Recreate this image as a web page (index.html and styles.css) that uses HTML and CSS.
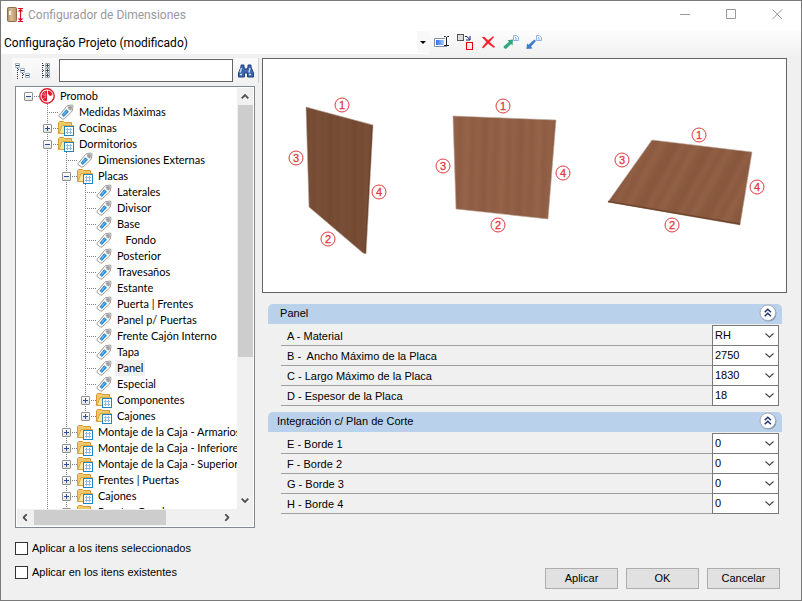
FILE: index.html
```html
<!DOCTYPE html>
<html lang="es">
<head>
    <meta charset="UTF-8">
    <title>Configurador de Dimensiones</title>
    <link rel="stylesheet" href="styles.css">
</head>
<body>
    <!-- shared icons -->
    <svg class="symbols" width="0" height="0">
        <symbol id="tag" viewBox="0 0 16 16">
            <path d="M1 11.5 L8.5 2.5 L10 1.5 L14.5 1 L15 2 L14.5 6 L13.5 8 L6 15 L4.5 15 L1 12.5Z" fill="#fff" stroke="#9a9a9a"/>
            <path d="M9 2.8 L14 1.8 L13.6 6.2 L12.6 7.2Z" fill="#cfcfcf"/>
            <rect x="11" y="3" width="2" height="2" fill="#fff" stroke="#808080"/>
            <path d="M3.5 10.8 L8.2 5.2 L11 7.8 L5.8 13Z" fill="#2d8fd0"/>
            <path d="M5.5 10.5 L8.5 7.2" stroke="#8fd0f4"/>
        </symbol>
        <symbol id="folder" viewBox="0 0 16 16">
            <path d="M.5 13.5 V2.5 L1.5 1.5 H5.5 L6.5 2.5 H13.5 V5.5 H4.5 L2 13.5Z" fill="#f0c96a" stroke="#d39a37"/>
            <path d="M1 13.5 L4 5.5 H15.5 L13 13.5Z" fill="#fde6a0" stroke="#dba545"/>
            <rect x="6.5" y="6.5" width="9" height="9" fill="#fff" stroke="#1f86c0"/>
            <path d="M8 9.5 H14 M8 12.5 H14 M9.5 8 V14 M12.5 8 V14" stroke="#93bbe0"/>
        </symbol>
        <symbol id="down" viewBox="0 0 9 5"><path d="M.5 .5 L4.5 4.2 L8.5 .5" fill="none" stroke="#444" stroke-width="1.1"/></symbol>
        <symbol id="arrow" viewBox="0 0 8 5"><path d="M.7 4.3 L4 1 L7.3 4.3" fill="none" stroke="#505050" stroke-width="1.8"/></symbol>
        <symbol id="collapse" viewBox="0 0 18 18">
            <circle cx="9.5" cy="9.5" r="8" fill="#8397b0"/>
            <circle cx="8.8" cy="8.8" r="7.8" fill="#fff" stroke="#a3acb9"/>
            <path d="M5.7 8.2 L8.8 5.2 L11.9 8.2 M5.7 12.2 L8.8 9.2 L11.9 12.2" fill="none" stroke="#1f356c" stroke-width="1.5"/>
        </symbol>
        <symbol id="sheet" viewBox="0 0 6 7"><path d="M.5 .5 H3.5 L5.5 2.5 V5.5 H.5Z M2 2.5 H3 M2 4 H4" fill="#eef4ff" stroke="#8fb2e6"/></symbol>
    </svg>

    <header class="titlebar">
        <svg width="18" height="16" viewBox="0 0 18 16">
            <defs>
                <linearGradient id="door"><stop offset="0" stop-color="#a98a63"/><stop offset=".4" stop-color="#d8bd96"/><stop offset="1" stop-color="#b99065"/></linearGradient>
            </defs>
            <rect x=".5" y=".5" width="9" height="14" rx="1" fill="url(#door)" stroke="#8f6d48"/>
            <rect x="2" y="4" width="2" height="4" fill="#f5f0e8"/>
            <path d="M11 1.5 H16 M11 14.5 H16 M13.5 2 V14 M11.5 4.5 L13.5 2.5 L15.5 4.5 M11.5 11.5 L13.5 13.5 L15.5 11.5" fill="none" stroke="#d8102c" stroke-width="1.2"/>
        </svg>
        <h1>Configurador de Dimensiones</h1>
        <div class="window-buttons">
            <button aria-label="Minimizar"><svg width="11" height="11" viewBox="0 0 11 11"><path d="M0 5.5 H10" /></svg></button>
            <button aria-label="Maximizar"><svg width="11" height="11" viewBox="0 0 11 11"><path d="M.5 .5 H9.5 V9.5 H.5Z" /></svg></button>
            <button aria-label="Cerrar"><svg width="11" height="11" viewBox="0 0 11 11"><path d="M.5 .5 L10 10 M10 .5 L.5 10" /></svg></button>
        </div>
    </header>

    <div class="toolbar">
        <div class="project">
            <select aria-label="Proyecto"><option>Configuração Projeto (modificado)</option></select>
            <span class="caret"></span>
        </div>
        <button aria-label="Renombrar">
            <svg width="17" height="16" viewBox="0 0 17 16">
                <defs><linearGradient id="blue"><stop offset="0" stop-color="#2f6fe0"/><stop offset="1" stop-color="#a9c8fa"/></linearGradient></defs>
                <path d="M12 4.5 H1.5 V12.5 H14" fill="#fff" stroke="#8090a8"/>
                <rect x="3" y="6" width="8" height="5" fill="url(#blue)"/>
                <path d="M11 2.5 H12.5 L13.5 3.5 L14.5 2.5 H16 M13.5 3 V11 M11 11.5 H16" fill="none" stroke="#222"/>
            </svg>
        </button>
        <button aria-label="Reemplazar">
            <svg width="17" height="16" viewBox="0 0 17 16">
                <rect x=".5" y=".5" width="6" height="6" fill="#ddd" stroke="#555"/>
                <rect x="9.5" y="8.5" width="6" height="7" fill="#ffe9e9" stroke="#e00000"/>
                <path d="M8 2.5 H10 L12.5 5.5 M13 2 V6 H9" fill="none" stroke="#0a1f78"/>
            </svg>
        </button>
        <button aria-label="Eliminar">
            <svg width="15" height="16" viewBox="0 0 15 16">
                <path d="M1 3 L3.5 3 L7 6.5 L12 2.5 L13 3 L8.5 8 L14 13 L12.5 13.5 L7 9.5 L2.5 14 L1 13.5 L5.5 8Z" fill="#f3202a" stroke="#f3202a" stroke-width=".3"/>
            </svg>
        </button>
        <button aria-label="Exportar">
            <svg width="16" height="16" viewBox="0 0 16 16">
                <path d="M1 14 L.5 12.5 L6 7.8 L4.5 6.2 L10 5.5 L9.5 11.5 L8 10 L3 15Z" fill="#2fa67c"/>
                <use href="#sheet" x="10" y="1" width="6" height="7"/>
            </svg>
        </button>
        <button aria-label="Importar">
            <svg width="16" height="16" viewBox="0 0 16 16">
                <path d="M.5 15 L1 9.5 L2.5 10.8 L8.5 5.5 L10 7 L5 12.5 L6.5 14.5Z" fill="#3f7bcf"/>
                <use href="#sheet" x="10" y="1" width="6" height="7"/>
            </svg>
        </button>
    </div>

    <main>
        <section class="sidebar">
            <div class="search">
                <button aria-label="Contraer todo">
                    <svg width="16" height="16" viewBox="0 0 16 16">
                        <path d="M2.5 5 V16 M3 6.5 H5 M7.5 10 V16 M8 11.5 H10" stroke="#333" stroke-dasharray="1 1"/>
                        <path d="M.5 .5 H4.5 V4.5 H.5Z M5.5 5.5 H9.5 V9.5 H5.5Z M10.5 10.5 H14.5 V14.5 H10.5Z" fill="#fff" stroke="#9fb3c4"/>
                        <path d="M1 2.5 H4 M6 7.5 H9 M11 12.5 H14" stroke="#1c4468"/>
                    </svg>
                </button>
                <button aria-label="Expandir todo">
                    <svg width="10" height="16" viewBox="0 0 10 16">
                        <path d="M1.5 0 V16 M2 2.5 H4 M2 7.5 H4 M2 12.5 H4" stroke="#333" stroke-dasharray="1 1"/>
                        <path d="M4.5 .5 H8.5 V4.5 H4.5Z M4.5 5.5 H8.5 V9.5 H4.5Z M4.5 10.5 H8.5 V14.5 H4.5Z" fill="#fff" stroke="#9aa7b4"/>
                        <path d="M5 2.5 H8 M5 7.5 H8 M5 12.5 H8 M6.5 1 V4 M6.5 6 V9 M6.5 11 V14" stroke="#444"/>
                    </svg>
                </button>
                <input type="text" aria-label="Buscar">
                <button aria-label="Buscar">
                    <svg width="16" height="14" viewBox="0 0 16 14">
                        <path d="M3 1 H6 V3 L7 5 H9 L10 3 V1 H13 V3 L15.5 9 V13 H9.5 V9 H6.5 V13 H.5 V9 L3 3Z" fill="#3e69b0" stroke="#213f7c"/>
                        <path d="M3.5 4 L2 8.5 M12 4 L11 8.5 M2 10.5 H4 M11 10.5 H13" stroke="#c4dbfa" stroke-width="1.4"/>
                    </svg>
                </button>
            </div>

            <div class="tree-box">
                <ul class="tree" id="tree"></ul>
                <div class="scroll-v">
                    <svg width="8" height="5"><use href="#arrow"/></svg>
                    <div class="thumb"></div>
                    <svg class="flip" width="8" height="5"><use href="#arrow"/></svg>
                </div>
                <div class="scroll-h">
                    <svg class="left" width="8" height="5"><use href="#arrow"/></svg>
                    <div class="thumb"></div>
                    <svg class="right" width="8" height="5"><use href="#arrow"/></svg>
                </div>
            </div>

            <div class="checks">
                <label><input type="checkbox">Aplicar a los itens seleccionados</label>
                <label><input type="checkbox">Aplicar en los itens existentes</label>
            </div>
        </section>

        <section class="content">
            <svg class="preview" viewBox="263 59 523 233" role="img" aria-label="Bordes de la placa">
                <defs>
                    <linearGradient id="wood-a" gradientUnits="userSpaceOnUse" x1="306" y1="0" x2="330" y2="0" spreadMethod="repeat">
                        <stop offset="0" stop-color="#724831"/><stop offset=".2" stop-color="#784e36"/><stop offset=".35" stop-color="#744a33"/>
                        <stop offset=".5" stop-color="#7a5138"/><stop offset=".7" stop-color="#754c33"/><stop offset=".8" stop-color="#794f37"/><stop offset="1" stop-color="#724831"/>
                    </linearGradient>
                    <linearGradient id="wood-b" gradientUnits="userSpaceOnUse" x1="453" y1="0" x2="489" y2="1" spreadMethod="repeat">
                        <stop offset="0" stop-color="#8b5a42"/><stop offset=".15" stop-color="#936147"/><stop offset=".3" stop-color="#8d5c43"/>
                        <stop offset=".5" stop-color="#956449"/><stop offset=".65" stop-color="#8e5c43"/><stop offset=".8" stop-color="#926148"/><stop offset="1" stop-color="#8b5a42"/>
                    </linearGradient>
                    <linearGradient id="wood-c" gradientUnits="userSpaceOnUse" x1="608" y1="140" x2="635" y2="155" spreadMethod="repeat">
                        <stop offset="0" stop-color="#87563d"/><stop offset=".2" stop-color="#8f5e43"/><stop offset=".4" stop-color="#8a5940"/>
                        <stop offset=".6" stop-color="#926145"/><stop offset=".8" stop-color="#8a5a40"/><stop offset="1" stop-color="#87563d"/>
                    </linearGradient>
                </defs>
                <path d="M306 107 L373 125 L366 254 L363 253 L309 207Z" fill="url(#wood-a)" stroke="#b9a497" stroke-width=".6"/>
                <path d="M372 126 L365 253" stroke="#6a422c"/>
                <path d="M453 116 L556 120 L548 219 L456 209Z" fill="url(#wood-b)" stroke="#b9a497" stroke-width=".6"/>
                <path d="M652 140 L752 152 L740 225 L608 202Z" fill="url(#wood-c)" stroke="#b9a497" stroke-width=".6"/>
                <path d="M608 201.5 L740 224" stroke="#6f462f" stroke-width="1.5"/>
                <g id="marks"></g>
            </svg>

            <div class="groups" id="groups"></div>

            <div class="actions">
                <button>Aplicar</button>
                <button>OK</button>
                <button>Cancelar</button>
            </div>
        </section>
    </main>

    <script>
        const leaf = name => ({ name });
        const closed = name => ({ name, children: [] });

        // more: the branch line goes on below the last visible row
        const root = {
            name: 'Promob', children: [
                leaf('Medidas Máximas'),
                closed('Cocinas'),
                { name: 'Dormitorios', more: true, children: [
                    leaf('Dimensiones Externas'),
                    { name: 'Placas', children: [
                        ...['Laterales', 'Divisor', 'Base', '\u00a0\u00a0\u00a0Fondo', 'Posterior', 'Travesaños', 'Estante',
                            'Puerta | Frentes', 'Panel p/ Puertas', 'Frente Cajón Interno', 'Tapa', 'Panel', 'Especial'].map(leaf),
                        closed('Componentes'),
                        closed('Cajones')
                    ] },
                    closed('Montaje de la Caja - Armarios'),
                    closed('Montaje de la Caja - Inferiores'),
                    closed('Montaje de la Caja - Superior'),
                    closed('Frentes | Puertas'),
                    closed('Cajones'),
                    closed('Puertas Canal')
                ] }
            ]
        };

        const rootIcon = `<svg class="icon" viewBox="0 0 16 16"><circle cx="8" cy="8" r="7.2" fill="#fff" stroke="#dc1f2e" stroke-width="1.4"/>
            <path d="M8 2.5 A5.5 5.5 0 1 0 8 13.5Z M9 2.5 A5.5 5.5 0 0 1 13.5 7 L11 8 L9 6Z" fill="#dc1f2e"/>
            <path d="M3 6 L7 8 M5 3.5 L7 7 M3.5 11 L7 9" stroke="#fff" stroke-width=".5"/></svg>`;

        function renderNode(node, isRoot) {
            const kids = node.children;
            const toggle = kids
                ? `<button class="toggle ${kids.length ? '' : 'plus'}" aria-label="${kids.length ? 'Contraer' : 'Expandir'}"></button>`
                : '<span class="no-toggle"></span>';
            const icon = isRoot ? rootIcon : `<svg class="icon"><use href="#${kids ? 'folder' : 'tag'}"/></svg>`;
            return `<li class="${node.more ? 'more' : ''}">
                <div class="node">${toggle}${icon}<span class="label ${node.name === 'Panel' ? 'selected' : ''}">${node.name}</span></div>
                ${kids && kids.length ? `<ul>${kids.map(k => renderNode(k)).join('')}</ul>` : ''}
            </li>`;
        }
        document.getElementById('tree').innerHTML = renderNode(root, true);

        const groups = [
            { title: '\u00a0Panel', rows: [['A - Material', 'RH'], ['B -\u00a0 Ancho Máximo de la Placa', '2750'],
                ['C - Largo Máximo de la Placa', '1830'], ['D - Espesor de la Placa', '18']] },
            { title: 'Integración c/ Plan de Corte', rows: [['E - Borde 1', '0'], ['F - Borde 2', '0'], ['G - Borde 3', '0'], ['H - Borde 4', '0']] }
        ];
        document.getElementById('groups').innerHTML = groups.map((group, g) => `
            <div class="group">
                <div class="group-title"><h2>${group.title}</h2>
                    <button aria-label="Contraer grupo"><svg width="18" height="18"><use href="#collapse"/></svg></button></div>
                ${group.rows.map(([text, value], i) => `
                <div class="field">
                    <label for="f${g}${i}">${text}</label>
                    <div class="combo"><select id="f${g}${i}"><option>${value}</option></select><svg width="9" height="5"><use href="#down"/></svg></div>
                </div>`).join('')}
            </div>`).join('');

        // edge numbers: [x, y, number]
        const marks = [[342, 105, 1], [328, 239, 2], [296, 158, 3], [379, 192, 4],
            [503, 106, 1], [498, 225, 2], [443, 166, 3], [563, 173, 4],
            [699, 135, 1], [672, 225, 2], [622, 160, 3], [757, 187, 4]];
        document.getElementById('marks').innerHTML = marks.map(([x, y, n]) =>
            `<circle cx="${x}" cy="${y}" r="7"/><text x="${x}" y="${y + 4}">${n}</text>`).join('');
    </script>
</body>
</html>
```
FILE: styles.css
```css
* {
    box-sizing: border-box;
}

body {
    margin: 0;
    min-height: 100vh;
    display: flex;
    flex-direction: column;
    border: 1px solid #7a7a7a;
    background: #f0f0f0;
    color: #000;
    font-family: "Liberation Sans", Arial, sans-serif;
    font-size: 11px;
    line-height: 16px;
}

button, input, select {
    font: inherit;
    color: inherit;
    margin: 0;
}

button {
    padding: 0;
    border: none;
    background: none;
}

svg {
    display: block;
    flex: none;
}

.symbols {
    position: absolute;
}

/* title bar */
.titlebar {
    display: flex;
    align-items: center;
    height: 29px;
    padding: 0 13px 2px 6px;
    background: #fff;
    font-family: Roboto, "Open Sans", sans-serif;
}

.titlebar h1 {
    flex: 1;
    margin: 0 0 0 3px;
    font-size: 12px;
    font-weight: normal;
    color: #999;
}

.window-buttons {
    display: flex;
}

.window-buttons button {
    width: 46px;
    display: flex;
    justify-content: center;
}

.window-buttons button:last-child {
    width: 22px;
    margin-left: 12px;
}

.window-buttons path {
    fill: none;
    stroke: #999;
}

/* toolbar */
.toolbar {
    display: flex;
    align-items: center;
    gap: 7px;
    height: 27px;
    padding-bottom: 3px;
    background: linear-gradient(#fdfdfd, #f0f0f0);
    font-family: Roboto, "Open Sans", sans-serif;
}

.project {
    flex: 0 1 428px;
    display: flex;
    align-items: center;
    height: 24px;
    margin-right: -3px;
    background: #fff;
}

.project select {
    flex: 1;
    padding: 1px 3px 0;
    border: none;
    background: none;
    appearance: none;
    font-size: 12px;
}

.caret {
    width: 12px;
    height: 22px;
    display: grid;
    place-items: center;
    background: #f8f8f8;
}

.caret::after {
    content: "";
    border: 3px solid transparent;
    border-top-color: #000;
    border-bottom: none;
}

main {
    flex: 1;
    display: flex;
    gap: 3px;
    padding: 1px 14px 11px 11px;
}

/* left side */
.sidebar {
    flex: none;
    width: 247px;
    display: flex;
    flex-direction: column;
}

.search {
    display: flex;
    align-items: center;
    gap: 5px;
    height: 25px;
    padding: 0 4px 0 3px;
    border-right: 1px solid #d0d0d0;
    background: linear-gradient(#fbfbfb, #f2f2f2);
}

.search input {
    flex: 1;
    min-width: 0;
    height: 23px;
    border: 1px solid #646464;
    background: #fff;
}

.search button:nth-child(2) {
    margin: 0 3px 0 5px;
}

.tree-box {
    flex: 1;
    display: grid;
    grid-template-columns: 1fr 16px;
    grid-template-rows: 1fr 17px;
    margin: 3px 4px 0 3px;
    padding: 1px;
    border: 1px solid #828790;
    background: #fff;
}

.tree, .tree ul {
    list-style: none;
    margin: 0;
    padding: 0;
}

.tree {
    height: 421px;
    padding-left: 7px;
    overflow: hidden;
    font-family: Lato, "Liberation Sans", sans-serif;
}

.tree ul {
    padding-left: 19px;
}

.tree ul li {
    background: repeating-linear-gradient(#808080 0 1px, transparent 1px 2px) 4px 0 / 1px 100% no-repeat;
}

.tree ul > li:last-child:not(.more) {
    background-size: 1px 8px;
}

.node {
    display: flex;
    align-items: center;
    height: 16px;
    white-space: nowrap;
    background: repeating-linear-gradient(90deg, #808080 0 1px, transparent 1px 2px) 4px 8px / 11px 1px no-repeat;
}

.node > * {
    flex: none;
}

.toggle {
    width: 9px;
    height: 9px;
    border: 1px solid #919191;
    border-radius: 1px;
    background: linear-gradient(#2f4c96, #2f4c96) center / 5px 1px no-repeat, linear-gradient(#fff, #e4e4e4);
}

.toggle.plus {
    background: linear-gradient(#2f4c96, #2f4c96) center / 5px 1px no-repeat,
        linear-gradient(#2f4c96, #2f4c96) center / 1px 5px no-repeat,
        linear-gradient(#fff, #e4e4e4);
}

.no-toggle {
    width: 9px;
}

.icon {
    width: 16px;
    height: 16px;
    margin: 0 3px 0 6px;
}

.label {
    padding: 0 2px;
}

.label.selected {
    background: #f0f0f0;
}

/* scroll bars */
.scroll-v, .scroll-h {
    display: flex;
    align-items: center;
    background: #f0f0f0;
}

.scroll-v {
    flex-direction: column;
    padding: 6px 0;
}

.scroll-v .thumb {
    width: 15px;
    height: 252px;
    margin: 6px 0 auto;
    background: #cdcdcd;
}

.scroll-h {
    grid-column: 1 / -1;
    padding: 0 22px 0 4px;
}

.scroll-h .thumb {
    width: 132px;
    height: 15px;
    margin: 0 auto 0 5px;
    background: #cdcdcd;
}

.flip {
    transform: rotate(180deg);
}

.left {
    transform: rotate(-90deg);
}

.right {
    transform: rotate(90deg);
}

.checks {
    display: grid;
    gap: 8px;
    margin: 12px 0 9px 3px;
}

.checks label {
    display: flex;
    align-items: center;
    gap: 4px;
}

.checks input {
    width: 13px;
    height: 13px;
    border: 1px solid #333;
    background: #fff;
    appearance: none;
}

/* right side */
.content {
    flex: 1;
    min-width: 0;
    display: flex;
    flex-direction: column;
}

.preview {
    width: 100%;
    border: 1px solid #646464;
    background: #fff;
}

#marks circle {
    fill: #fff;
    stroke: #e0393e;
}

#marks text {
    fill: #e0393e;
    stroke: #e0393e;
    stroke-width: 0.3px;
    font-size: 11px;
    text-anchor: middle;
}

.groups {
    display: grid;
    gap: 6px;
    padding: 11px 5px 0 6px;
}

.group-title {
    display: flex;
    align-items: center;
    height: 20px;
    margin-bottom: 1px;
    padding: 0 5px 2px 9px;
    border-radius: 5px 5px 0 0;
    background: #b9d1ea;
}

.group-title h2 {
    flex: 1;
    margin: 0;
    font-size: 11px;
    font-weight: normal;
}

.field {
    display: flex;
    margin: 0 3px 0 13px;
}

.field + .field {
    margin-top: -1px;
}

.field label {
    flex: 1;
    height: 21px;
    padding: 3px 6px 0;
    border-bottom: 1px solid #a0a0a0;
}

.combo {
    display: grid;
    grid-template-columns: 1fr 13px;
    align-items: center;
    width: 67px;
    height: 21px;
    border: 1px solid #7a7a7a;
    background: #fff;
}

.combo select {
    grid-area: 1 / 1 / 2 / 3;
    height: 19px;
    padding: 0 2px 2px;
    border: none;
    background: none;
    appearance: none;
}

.combo svg {
    grid-area: 1 / 2;
    pointer-events: none;
}

.actions {
    display: flex;
    justify-content: flex-end;
    gap: 8px;
    margin-top: auto;
    padding-right: 7px;
}

.actions button {
    width: 73px;
    height: 21px;
    padding-bottom: 2px;
    border: 1px solid #adadad;
    background: #e1e1e1;
}
```
